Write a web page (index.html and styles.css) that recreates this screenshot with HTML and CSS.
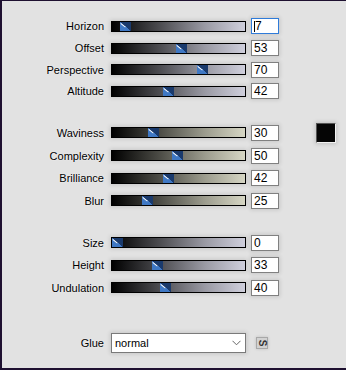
FILE: index.html
```html
<!DOCTYPE html>
<html>
<head>
<meta charset="utf-8">
<link rel="stylesheet" href="styles.css">
</head>
<body>
<div class="panel">
  <div class="group g1">
    <div class="row"><span class="lbl">Horizon</span><div class="track lav"><span class="thumb" style="left:8px"></span></div><div class="num focus"><span class="caret"></span>7</div></div>
    <div class="row"><span class="lbl">Offset</span><div class="track lav"><span class="thumb" style="left:64px"></span></div><div class="num">53</div></div>
    <div class="row"><span class="lbl">Perspective</span><div class="track lav"><span class="thumb" style="left:85px"></span></div><div class="num">70</div></div>
    <div class="row"><span class="lbl">Altitude</span><div class="track lav"><span class="thumb" style="left:51px"></span></div><div class="num">42</div></div>
  </div>
  <div class="group g2">
    <div class="row"><span class="lbl">Waviness</span><div class="track beige"><span class="thumb" style="left:36px"></span></div><div class="num">30</div><div class="swatch"></div></div>
    <div class="row"><span class="lbl">Complexity</span><div class="track beige"><span class="thumb" style="left:60px"></span></div><div class="num">50</div></div>
    <div class="row"><span class="lbl">Brilliance</span><div class="track beige"><span class="thumb" style="left:51px"></span></div><div class="num">42</div></div>
    <div class="row"><span class="lbl">Blur</span><div class="track beige"><span class="thumb" style="left:30px"></span></div><div class="num">25</div></div>
  </div>
  <div class="group g3">
    <div class="row"><span class="lbl">Size</span><div class="track lav"><span class="thumb" style="left:0px"></span></div><div class="num">0</div></div>
    <div class="row"><span class="lbl">Height</span><div class="track lav"><span class="thumb" style="left:40px"></span></div><div class="num">33</div></div>
    <div class="row"><span class="lbl">Undulation</span><div class="track lav"><span class="thumb" style="left:48px"></span></div><div class="num">40</div></div>
  </div>
  <div class="group g4">
    <div class="row glue"><span class="lbl">Glue</span>
      <div class="select"><span>normal</span>
        <svg class="chev" width="9" height="6" viewBox="0 0 9 6"><path d="M0.5 0.8 L4.5 4.8 L8.5 0.8" fill="none" stroke="#666" stroke-width="1"/></svg>
      </div>
      <div class="sbtn"><span>S</span></div>
    </div>
  </div>
</div>
</body>
</html>
```
FILE: styles.css
```css
html, body { margin: 0; padding: 0; }
body { background: #e2e2e2; }
.panel {
  box-sizing: border-box;
  width: 346px;
  height: 370px;
  background: #e2e2e2;
  border-left: 2px solid #1e1030;
  border-top: 1px solid #1e1030;
  border-bottom: 2px solid #1e1030;
  font-family: "Liberation Sans", Arial, sans-serif;
  padding-top: 14.67px;
}
.group { display: flex; flex-direction: column; }
.g1 .row { height: 21.67px; }
.g2 { margin-top: 19.33px; }
.g2 .row { height: 22.67px; }
.g3 { margin-top: 19.42px; }
.g3 .row { height: 22.5px; }
.g4 { margin-top: 32.75px; }
.g4 .row { height: 22px; }
.row {
  display: grid;
  grid-template-columns: 102px 135px 28px 20px;
  column-gap: 7px;
  align-items: center;
}
.row > .num { margin-left: -2px; }
.row > .swatch { margin-left: 28px; }
.lbl {
  text-align: right;
  font-size: 11px;
  color: #000;
  text-shadow: 0 0 2px rgba(255,255,255,0.8);
}
.track {
  position: relative;
  box-sizing: border-box;
  height: 11px;
  border: 1px solid #000;
  box-shadow: 0 0 4px 1px rgba(0,0,0,0.12);
}
.track.lav { background: linear-gradient(to right, #000 0%, #4a4a4e 35%, #9a9aa4 70%, #cfcfdc 100%); }
.track.beige { background: linear-gradient(to right, #000 0%, #4a4a44 35%, #9c9c8e 70%, #d6d6c4 100%); }
.thumb {
  position: absolute;
  top: 0;
  width: 11px;
  height: 9px;
  overflow: hidden;
  background: linear-gradient(40deg, #3f78c4 0 50%, #1a3a6c 50% 100%);
}
.thumb::before {
  content: "";
  position: absolute;
  left: 1px;
  top: 1px;
  width: 6px;
  height: 1px;
  background: #fff;
  transform: rotate(38deg);
  transform-origin: 0 0;
}
.num {
  box-sizing: border-box;
  width: 28px;
  height: 16px;
  background: #fff;
  border: 1px solid #808080;
  font-size: 12px;
  line-height: 14px;
  padding-left: 2px;
  color: #000;
  box-shadow: 0 0 4px 1px rgba(0,0,0,0.12);
  display: flex;
  align-items: center;
}
.num.focus { border-color: #2f7bd9; }
.caret { display: inline-block; width: 1px; height: 11px; background: #000; }
.swatch {
  box-sizing: border-box;
  width: 20px;
  height: 20px;
  background: #050505;
  border-top: 1px solid #555;
  border-left: 1px solid #555;
  border-right: 1px solid #f2f2f2;
  border-bottom: 1px solid #f2f2f2;
  box-shadow: 0 0 4px 1px rgba(0,0,0,0.15);
}
.glue { grid-template-columns: 102px 135px 12px; column-gap: 7px; }
.glue .sbtn { margin-left: 3px; }
.select {
  box-sizing: border-box;
  height: 20px;
  background: #fff;
  border: 1px solid #7a7a7a;
  display: flex;
  align-items: center;
  justify-content: space-between;
  padding: 0 4px 0 3px;
  font-size: 11px;
  color: #000;
  box-shadow: 0 0 4px 1px rgba(0,0,0,0.12);
}
.chev { display: block; }
.sbtn {
  box-sizing: border-box;
  width: 12px;
  height: 12px;
  background: #d2d2d2;
  border: 1px solid #a8a8a8;
  display: flex;
  align-items: center;
  justify-content: center;
  box-shadow: 0 0 3px rgba(0,0,0,0.15);
}
.sbtn span {
  display: block;
  font-size: 10px;
  font-weight: bold;
  line-height: 10px;
  color: #333;
  transform: rotate(90deg);
}
```
